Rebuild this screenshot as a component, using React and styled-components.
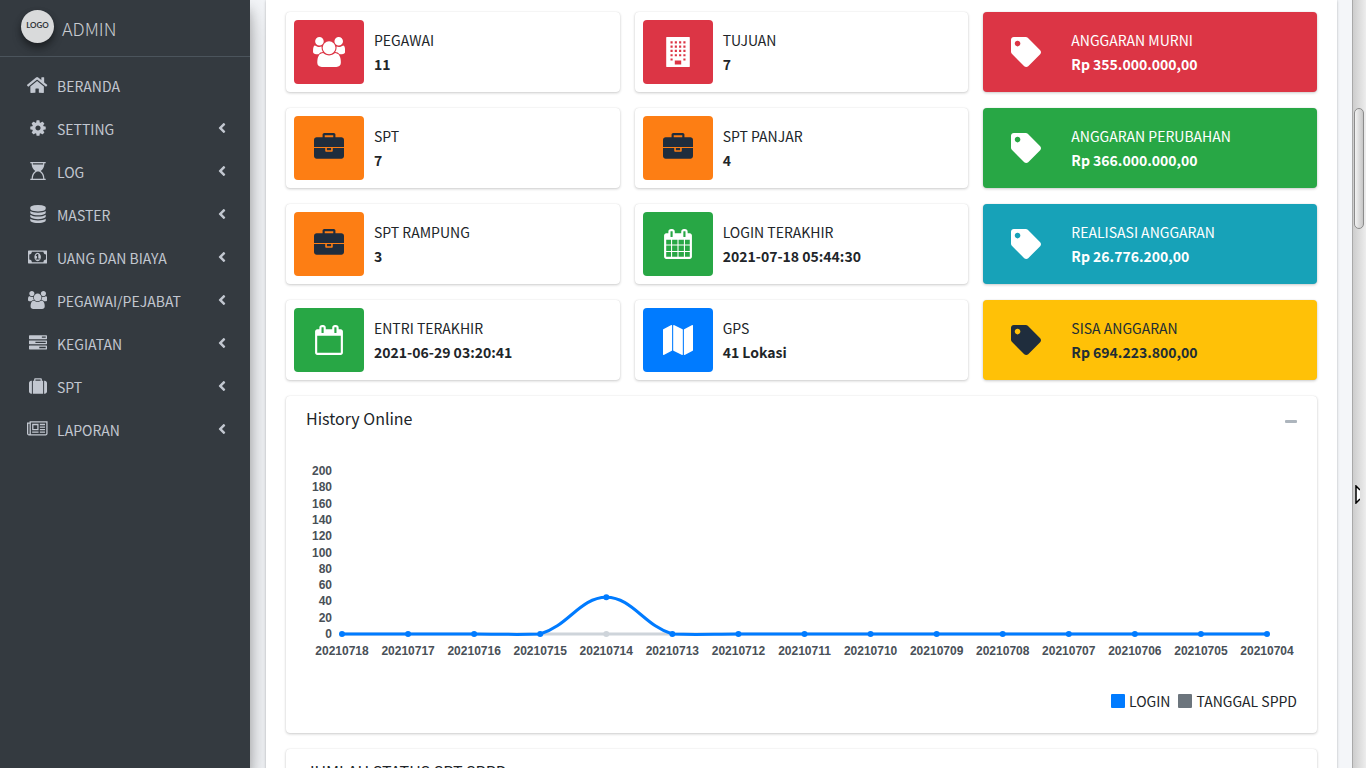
import React from "react";
import styled, { createGlobalStyle } from "styled-components";
import { FaAngleLeft } from "react-icons/fa";

const GlobalStyle = createGlobalStyle`
  *, *::before, *::after { box-sizing: border-box; }
  body {
    margin: 0;
    background: #f4f6f9;
    color: #212529;
    font-family: "Source Sans Pro", "Noto Sans CJK SC", "Liberation Sans", sans-serif;
    font-size: 14px;
    line-height: 24px;
  }
`;

const ICONS = {
  home: {
    box: "0 0 576 512",
    d: "M280.37 148.26L96 300.11V464a16 16 0 0 0 16 16l112.06-.29a16 16 0 0 0 15.92-16V368a16 16 0 0 1 16-16h64a16 16 0 0 1 16 16v95.64a16 16 0 0 0 16 16.05L464 480a16 16 0 0 0 16-16V300L295.67 148.26a12.19 12.19 0 0 0-15.3 0zM571.6 251.47L488 182.56V44.05a12 12 0 0 0-12-12h-56a12 12 0 0 0-12 12v72.61L318.47 43a48 48 0 0 0-61 0L4.34 251.47a12 12 0 0 0-1.6 16.9l25.5 31A12 12 0 0 0 45.15 301l235.22-193.74a12.19 12.19 0 0 1 15.3 0L530.9 301a12 12 0 0 0 16.9-1.6l25.5-31a12 12 0 0 0-1.7-16.93z",
  },
  cog: {
    d: "M1152 896q0-106-75-181t-181-75-181 75-75 181 75 181 181 75 181-75 75-181zm512-109v222q0 12-8 23t-20 13l-185 28q-19 54-39 91 35 50 107 138 10 12 10 25t-9 23q-27 37-99 108t-94 71q-12 0-26-9l-138-108q-44 23-91 38-16 136-29 186-7 28-36 28h-222q-14 0-24.5-8.5t-11.5-21.5l-28-184q-49-16-90-37l-141 107q-10 9-25 9-14 0-25-11-126-114-165-168-7-10-7-23 0-12 8-23 15-21 51-66.5t54-70.5q-27-50-41-99l-183-27q-13-2-21-12.5t-8-23.5v-222q0-12 8-23t19-13l186-28q14-46 39-92-40-57-107-138-10-12-10-24 0-10 9-23 26-36 98.5-107.5t94.5-71.5q13 0 26 10l138 107q44-23 91-38 16-136 29-186 7-28 36-28h222q14 0 24.5 8.5t11.5 21.5l28 184q49 16 90 37l142-107q9-9 24-9 13 0 25 10 129 119 165 170 7 8 7 22 0 12-8 23-15 21-51 66.5t-54 70.5q26 50 41 98l183 28q13 2 21 12.5t8 23.5z",
  },
  hourglass: {
    d: "M1536 128q0 261-106.5 461.5t-266.5 306.5q160 106 266.5 306.5t106.5 461.5h96q14 0 23 9t9 23v64q0 14-9 23t-23 9h-1472q-14 0-23-9t-9-23v-64q0-14 9-23t23-9h96q0-261 106.5-461.5t266.5-306.5q-160-106-266.5-306.5t-106.5-461.5h-96q-14 0-23-9t-9-23v-64q0-14 9-23t23-9h1472q14 0 23 9t9 23v64q0 14-9 23t-23 9h-96zM393 256h1006q9-62 9-128h-1024q0 66 9 128zM1002 956q-19-7-30.5 0h-151q-11-7-30.5 0-77 29-149 92.5t-129.5 152.5-92.5 210-35 253h1024q0-132-35-253t-92.5-210-129.5-152.5-149-92.5z",
  },
  database: {
    d: "M896 768q237 0 443-43t325-127v170q0 69-103 128t-280 93.5-385 34.5-385-34.5-280-93.5-103-128v-170q119 84 325 127t443 43zm0 768q237 0 443-43t325-127v170q0 69-103 128t-280 93.5-385 34.5-385-34.5-280-93.5-103-128v-170q119 84 325 127t443 43zm0-384q237 0 443-43t325-127v170q0 69-103 128t-280 93.5-385 34.5-385-34.5-280-93.5-103-128v-170q119 84 325 127t443 43zm0-1152q208 0 385 34.5t280 93.5 103 128v128q0 69-103 128t-280 93.5-385 34.5-385-34.5-280-93.5-103-128v-128q0-69 103-128t280-93.5 385-34.5z",
  },
  money: {
    box: "0 0 1920 1792",
    d: "M768 1152h384v-96h-128v-448h-114l-148 137 77 80q42-37 55-57h2v288h-128v96zm512-256q0 70-21 142t-59.5 134-101.5 101-138 39-138-39-101.5-101-59.5-134-21-142 21-142 59.5-134 101.5-101 138-39 138 39 101.5 101 59.5 134 21 142zm512 256v-512q-106 0-181-75t-75-181h-1152q0 106-75 181t-181 75v512q106 0 181 75t75 181h1152q0-106 75-181t181-75zm128-832v1152q0 26-19 45t-45 19h-1792q-26 0-45-19t-19-45v-1152q0-26 19-45t45-19h1792q26 0 45 19t19 45z",
  },
  users: {
    box: "-64 0 1920 1792",
    d: "M529 896q-162 5-265 128h-134q-82 0-138-40.5t-56-118.5q0-353 124-353 6 0 43.5 21t97.5 42.5 119 21.5q67 0 133-23-5 37-5 66 0 139 81 256zm1071 637q0 120-73 189.5t-194 69.5h-874q-121 0-194-69.5t-73-189.5q0-53 3.5-103.5t14-109 26.5-108.5 43-97.5 62-81 85.5-53.5 111.5-20q10 0 43 21.5t73 48 107 48 135 21.5 135-21.5 107-48 73-48 43-21.5q61 0 111.5 20t85.5 53.5 62 81 43 97.5 26.5 108.5 14 109 3.5 103.5zm-1024-1277q0 106-75 181t-181 75-181-75-75-181 75-181 181-75 181 75 75 181zm704 384q0 159-112.5 271.5t-271.5 112.5-271.5-112.5-112.5-271.5 112.5-271.5 271.5-112.5 271.5 112.5 112.5 271.5zm576 225q0 78-56 118.5t-138 40.5h-134q-103-123-265-128 81-117 81-256 0-29-5-66 66 23 133 23 59 0 119-21.5t97.5-42.5 43.5-21q124 0 124 353zm-128-609q0 106-75 181t-181 75-181-75-75-181 75-181 181-75 181 75 75 181z",
  },
  tasks: {
    d: "M1024 1408h640v-128h-640v128zm-384-512h1024v-128h-1024v128zm640-512h384v-128h-384v128zm512 832v256q0 26-19 45t-45 19h-1664q-26 0-45-19t-19-45v-256q0-26 19-45t45-19h1664q26 0 45 19t19 45zm0-512v256q0 26-19 45t-45 19h-1664q-26 0-45-19t-19-45v-256q0-26 19-45t45-19h1664q26 0 45 19t19 45zm0-512v256q0 26-19 45t-45 19h-1664q-26 0-45-19t-19-45v-256q0-26 19-45t45-19h1664q26 0 45 19t19 45z",
  },
  suitcase: {
    d: "M640 384h512v-128h-512v128zM288 384v1280h-64q-92 0-158-66t-66-158v-832q0-92 66-158t158-66h64zm1120 0v1280h-1024v-1280h128v-160q0-40 28-68t68-28h576q40 0 68 28t28 68v160h128zm384 224v832q0 92-66 158t-158 66h-64v-1280h64q92 0 158 66t66 158z",
  },
  newspaper: {
    box: "0 0 2048 1792",
    d: "M1024 512h-384v384h384v-384zm128 640v128h-640v-128h640zm0-768v640h-640v-640h640zm640 768v128h-512v-128h512zm0-256v128h-512v-128h512zm0-256v128h-512v-128h512zm0-256v128h-512v-128h512zm-1536 960v-960h-128v960q0 26 19 45t45 19 45-19 19-45zm1664 0v-1088h-1536v1088q0 33-11 64h1483q26 0 45-19t19-45zm128-1216v1216q0 80-56 136t-136 56h-1664q-80 0-136-56t-56-136v-1088h256v-128h1792z",
  },
  briefcase: {
    d: "M640 256h512v-128h-512v128zm1152 640v480q0 66-47 113t-113 47h-1472q-66 0-113-47t-47-113v-480h672v160q0 26 19 45t45 19h320q26 0 45-19t19-45v-160h672zm-768 0v128h-256v-128h256zm768-480v420h-1792v-420q0-66 47-113t113-47h352v-160q0-40 28-68t68-28h576q40 0 68 28t28 68v160h352q66 0 113 47t47 113z",
  },
  calendar: {
    d: "M192 1664h288v-288h-288v288zm352 0h320v-288h-320v288zm-352-352h288v-320h-288v320zm352 0h320v-320h-320v320zm-352-384h288v-288h-288v288zm736 736h320v-288h-320v288zm-384-736h320v-288h-320v288zm768 736h288v-288h-288v288zm-384-352h320v-320h-320v320zm-352-864v-288q0-13-9.5-22.5t-22.5-9.5h-64q-13 0-22.5 9.5t-9.5 22.5v288q0 13 9.5 22.5t22.5 9.5h64q13 0 22.5-9.5t9.5-22.5zm736 864h288v-320h-288v320zm-384-384h320v-288h-320v288zm384 0h288v-288h-288v288zm32-480v-288q0-13-9.5-22.5t-22.5-9.5h-64q-13 0-22.5 9.5t-9.5 22.5v288q0 13 9.5 22.5t22.5 9.5h64q13 0 22.5-9.5t9.5-22.5zm384-64v1280q0 52-38 90t-90 38h-1408q-52 0-90-38t-38-90v-1280q0-52 38-90t90-38h128v-96q0-66 47-113t113-47h64q66 0 113 47t47 113v96h384v-96q0-66 47-113t113-47h64q66 0 113 47t47 113v96h128q52 0 90 38t38 90z",
  },
  calendarBlank: {
    d: "M192 1664h1408v-1024h-1408v1024zm384-1216v-288q0-14-9-23t-23-9h-64q-14 0-23 9t-9 23v288q0 14 9 23t23 9h64q14 0 23-9t9-23zm768 0v-288q0-14-9-23t-23-9h-64q-14 0-23 9t-9 23v288q0 14 9 23t23 9h64q14 0 23-9t9-23zm384-64v1280q0 52-38 90t-90 38h-1408q-52 0-90-38t-38-90v-1280q0-52 38-90t90-38h128v-96q0-66 47-113t113-47h64q66 0 113 47t47 113v96h384v-96q0-66 47-113t113-47h64q66 0 113 47t47 113v96h128q52 0 90 38t38 90z",
  },
  building: {
    d:
      "M216 0h1360q24 0 24 24v1744q0 24-24 24h-1360q-24 0-24-24v-1744q0-24 24-24z" +
      [256, 512, 768, 1024, 1280]
        .map((y) => [448, 704, 960, 1216].map((x) => (y === 1280 && (x === 704 || x === 960) ? "" : `M${x} ${y}h128v128h-128z`)).join(""))
        .join("") +
      "M704 1408h384v236h-384z",
  },
  map: {
    d: "M512 0q13 0 22.5 9.5t9.5 22.5v1472q0 20-17 28l-480 256q-7 4-15 4-13 0-22.5-9.5t-9.5-22.5v-1472q0-20 17-28l480-256q7-4 15-4zm1248 0q13 0 22.5 9.5t9.5 22.5v1472q0 20-17 28l-480 256q-7 4-15 4-13 0-22.5-9.5t-9.5-22.5v-1472q0-20 17-28l480-256q7-4 15-4zm-1120 0q8 0 14 3l512 256q18 10 18 29v1472q0 13-9.5 22.5t-22.5 9.5q-8 0-14-3l-512-256q-18-10-18-29v-1472q0-13 9.5-22.5t22.5-9.5z",
  },
  tag: {
    box: "0 0 512 512",
    d: "M0 252.118V48C0 21.49 21.49 0 48 0h204.118a48 48 0 0 1 33.941 14.059l211.882 211.882c18.745 18.745 18.745 49.137 0 67.882L293.823 497.941c-18.745 18.745-49.137 18.745-67.882 0L14.059 286.059A48 48 0 0 1 0 252.118zM112 64c-26.51 0-48 21.49-48 48s21.49 48 48 48 48-21.49 48-48-21.49-48-48-48z",
  },
};

const Glyph = styled.svg`
  display: block;
  flex: none;
  height: ${(p) => p.$size}px;
  fill: currentColor;
  fill-rule: evenodd;
`;

function Icon({ name, size }) {
  const icon = ICONS[name];
  return (
    <Glyph $size={size} viewBox={icon.box || "0 0 1792 1792"} aria-hidden="true">
      <path d={icon.d} />
    </Glyph>
  );
}

const Shell = styled.div`
  display: flex;
  height: 100vh;
  overflow: hidden;
`;

const Sidebar = styled.aside`
  position: relative;
  flex: 0 0 250px;
  background: #343a40;
  box-shadow: 0 14px 28px rgba(0, 0, 0, 0.25), 0 10px 10px rgba(0, 0, 0, 0.22);
`;

const Brand = styled.a`
  display: flex;
  align-items: center;
  gap: 8px;
  height: 57px;
  padding: 0 21px 4px;
  border-bottom: 1px solid #4b545c;
  color: #c9ccd0;
  font-size: 18px;
  font-weight: 300;
  text-decoration: none;
`;

const Logo = styled.span`
  display: grid;
  place-items: center;
  width: 33px;
  height: 33px;
  padding-bottom: 3px;
  border-radius: 50%;
  background: #d9dadb;
  box-shadow: 0 3px 6px rgba(0, 0, 0, 0.3), 0 6px 10px rgba(0, 0, 0, 0.25);
  color: #33373b;
  font: bold 8px/12px Lato, sans-serif;
`;

const BrandName = styled.span`
  padding-top: 3px;
`;

const Nav = styled.nav`
  display: grid;
  gap: 3px;
  padding: 8px;
`;

const NavLink = styled.a`
  display: flex;
  align-items: center;
  height: 40px;
  padding: 0 12px 0 16px;
  color: #c2c7d0;
  text-decoration: none;

  > svg:last-child {
    margin-left: auto;
  }
`;

const NavIcon = styled.span`
  display: flex;
  justify-content: center;
  width: 27px;
  margin-right: 6px;
`;

const NavLabel = styled.span`
  padding-top: 2px;
`;

const Content = styled.main`
  flex: 1;
  min-width: 0;
  padding: 0 15px 0 16px;
  overflow: hidden;
`;

const Panel = styled.div`
  position: relative;
  display: grid;
  gap: 16px;
  padding: 12px 20px;
  background: #fff;
  box-shadow: 0 0 1px rgba(0, 0, 0, 0.125), 0 1px 3px rgba(0, 0, 0, 0.2);
`;

const Stats = styled.section`
  display: grid;
  grid-template-columns: repeat(3, minmax(0, 1fr));
  gap: 16px 15px;
`;

const InfoBox = styled.article`
  display: flex;
  min-height: 80px;
  padding: 8px;
  border-radius: 4px;
  background: ${(p) => p.$fill || "#fff"};
  box-shadow: 0 0 1px rgba(0, 0, 0, 0.125), 0 1px 3px rgba(0, 0, 0, 0.2);
  color: ${(p) => p.$ink || "#212529"};
`;

const IconTile = styled.span`
  display: grid;
  place-items: center;
  flex: 0 0 70px;
  border-radius: 4px;
  background: ${(p) => p.$fill || "transparent"};
  color: ${(p) => p.$ink};
`;

const InfoText = styled.div`
  display: flex;
  flex-direction: column;
  justify-content: center;
  padding: 0 10px;
`;

const Value = styled.strong`
  font-weight: 700;
`;

const Card = styled.section`
  min-height: 337px;
  border-radius: 4px;
  background: #fff;
  box-shadow: 0 0 1px rgba(0, 0, 0, 0.125), 0 1px 3px rgba(0, 0, 0, 0.2);
`;

const CardHeader = styled.header`
  display: flex;
  align-items: center;
  justify-content: space-between;
  height: 44px;
  padding: 0 20px;
`;

const CardTitle = styled.h2`
  margin: 0;
  font-size: 16px;
  font-weight: 400;
`;

const CollapseButton = styled.button`
  display: grid;
  place-items: center;
  width: 12px;
  height: 24px;
  padding: 6px 0 0;
  border: 0;
  background: none;

  &::before {
    content: "";
    width: 12px;
    height: 3px;
    border-radius: 1px;
    background: #adb5bd;
  }
`;

const CardBody = styled.div`
  padding: 22px 20px 20px;
`;

const Chart = styled.svg`
  display: block;
  width: 100%;
  height: auto;
  fill: #495057;
  font: bold 12px "Liberation Sans", Arial, sans-serif;
`;

const Legend = styled.ul`
  display: flex;
  justify-content: flex-end;
  gap: 8px;
  margin: 0;
  padding: 27px 0 0;
  list-style: none;
`;

const LegendItem = styled.li`
  display: flex;
  align-items: center;
  gap: 4px;

  &::before {
    content: "";
    width: 14px;
    height: 14px;
    border-radius: 1px;
    background: ${(p) => p.$color};
  }
`;

const ScrollTrack = styled.div`
  position: relative;
  flex: 0 0 14px;
  padding: 108px 2px 0 1px;
  border-left: 1px solid #a9a9a9;
  background: linear-gradient(90deg, #cdcdcd, #ededed);
`;

const ScrollThumb = styled.div`
  width: 10px;
  height: 121px;
  border: 1px solid #8c8c8c;
  border-radius: 5px;
  background: linear-gradient(90deg, #f2f2f2, #c6c6c6);
`;

const Pointer = styled.svg`
  position: absolute;
  top: 485px;
  left: 2px;
  width: 5px;
  height: 19px;
`;

const NAV = [
  ["home", "BERANDA"],
  ["cog", "SETTING"],
  ["hourglass", "LOG"],
  ["database", "MASTER"],
  ["money", "UANG DAN BIAYA"],
  ["users", "PEGAWAI/PEJABAT"],
  ["tasks", "KEGIATAN"],
  ["suitcase", "SPT"],
  ["newspaper", "LAPORAN"],
];

const RED = "#dc3545";
const GREEN = "#28a745";
const ORANGE = "#fd7e14";
const DARK = "#1f2d3d";
const WHITE = "#fff";

const STATS = [
  { icon: "users", tile: RED, iconInk: WHITE, label: "PEGAWAI", value: "11" },
  { icon: "building", tile: RED, iconInk: WHITE, label: "TUJUAN", value: "7" },
  { icon: "tag", box: RED, ink: WHITE, iconInk: WHITE, label: "ANGGARAN MURNI", value: "Rp 355.000.000,00" },
  { icon: "briefcase", tile: ORANGE, iconInk: DARK, label: "SPT", value: "7" },
  { icon: "briefcase", tile: ORANGE, iconInk: DARK, label: "SPT PANJAR", value: "4" },
  { icon: "tag", box: GREEN, ink: WHITE, iconInk: WHITE, label: "ANGGARAN PERUBAHAN", value: "Rp 366.000.000,00" },
  { icon: "briefcase", tile: ORANGE, iconInk: DARK, label: "SPT RAMPUNG", value: "3" },
  { icon: "calendar", tile: GREEN, iconInk: WHITE, label: "LOGIN TERAKHIR", value: "2021-07-18 05:44:30" },
  { icon: "tag", box: "#17a2b8", ink: WHITE, iconInk: WHITE, label: "REALISASI ANGGARAN", value: "Rp 26.776.200,00" },
  { icon: "calendarBlank", tile: GREEN, iconInk: WHITE, label: "ENTRI TERAKHIR", value: "2021-06-29 03:20:41" },
  { icon: "map", tile: "#007bff", iconInk: WHITE, label: "GPS", value: "41 Lokasi" },
  { icon: "tag", box: "#ffc107", ink: "#212d35", iconInk: DARK, label: "SISA ANGGARAN", value: "Rp 694.223.800,00" },
];

const DAYS = Array.from({ length: 15 }, (_, i) => 20210718 - i);
const TICKS = Array.from({ length: 11 }, (_, i) => i * 20);
const xAt = (i) => 36 + (i * 925) / 14;
const yAt = (v) => 172 - (v * 163) / 200;

function HistoryChart() {
  const x = xAt;
  const base = yAt(0);
  const peak = yAt(45);
  const line =
    `M${x(0)} ${base}H${x(2)}C${x(2) + 26} ${base} ${x(3) - 25} ${base + 1} ${x(3)} ${base}` +
    `C${x(3) + 28} ${base - 8} ${x(4) - 26} ${peak} ${x(4)} ${peak}` +
    `C${x(4) + 26} ${peak} ${x(5) - 28} ${base - 8} ${x(5)} ${base}` +
    `C${x(5) + 25} ${base + 1} ${x(6) - 26} ${base} ${x(6)} ${base}H${x(14)}`;
  return (
    <Chart viewBox="0 0 991 200" role="img" aria-label="History Online">
      {TICKS.map((t) => (
        <text key={t} x="26" y={yAt(t) + 4} textAnchor="end">{t}</text>
      ))}
      {DAYS.map((d, i) => (
        <text key={d} x={x(i)} y="193" textAnchor="middle">{d}</text>
      ))}
      <path d={`M${x(0)} ${base}H${x(14)}`} fill="none" stroke="#ced4da" strokeWidth="3" />
      <circle cx={x(4)} cy={base} r="3" fill="#ced4da" />
      <path d={line} fill="none" stroke="#007bff" strokeWidth="3" />
      {DAYS.map((d, i) => (
        <circle key={d} cx={x(i)} cy={i === 4 ? peak : base} r="3" fill="#007bff" />
      ))}
    </Chart>
  );
}

export default function App() {
  return (
    <>
      <GlobalStyle />
      <Shell>
        <Sidebar>
          <Brand href="#">
            <Logo>LOGO</Logo>
            <BrandName>ADMIN</BrandName>
          </Brand>
          <Nav>
            {NAV.map(([icon, label], i) => (
              <NavLink key={label} href="#">
                <NavIcon><Icon name={icon} size={18} /></NavIcon>
                <NavLabel>{label}</NavLabel>
                {i > 0 && <FaAngleLeft size={16} aria-hidden="true" />}
              </NavLink>
            ))}
          </Nav>
        </Sidebar>
        <Content>
          <Panel>
            <Stats>
              {STATS.map((s) => (
                <InfoBox key={s.label} $fill={s.box} $ink={s.ink}>
                  <IconTile $fill={s.tile} $ink={s.iconInk}><Icon name={s.icon} size={30} /></IconTile>
                  <InfoText>
                    <span>{s.label}</span>
                    <Value>{s.value}</Value>
                  </InfoText>
                </InfoBox>
              ))}
            </Stats>
            <Card>
              <CardHeader>
                <CardTitle>History Online</CardTitle>
                <CollapseButton type="button" aria-label="Collapse" />
              </CardHeader>
              <CardBody>
                <HistoryChart />
                <Legend>
                  <LegendItem $color="#007bff">LOGIN</LegendItem>
                  <LegendItem $color="#6c757d">TANGGAL SPPD</LegendItem>
                </Legend>
              </CardBody>
            </Card>
            <Card>
              <CardHeader>
                <CardTitle>JUMLAH STATUS SPT SPPD</CardTitle>
              </CardHeader>
            </Card>
          </Panel>
        </Content>
        <ScrollTrack>
          <ScrollThumb />
          <Pointer viewBox="0 0 5 19" aria-hidden="true">
            <path d="M1 1V18L5 14V5Z" fill="#fff" />
            <path d="M5 5L1 1V18L5 14" fill="none" stroke="#000" strokeWidth="1.5" />
          </Pointer>
        </ScrollTrack>
      </Shell>
    </>
  );
}
